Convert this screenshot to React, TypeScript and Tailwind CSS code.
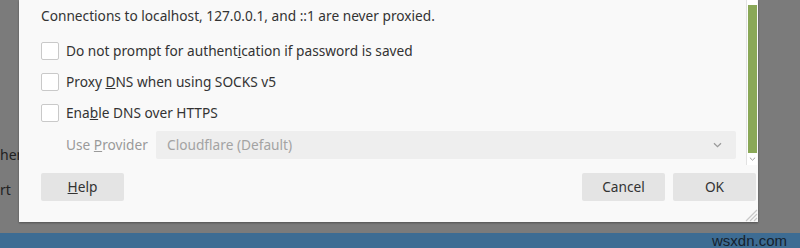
import React from 'react'

const Box = () => (
  <span className="w-[18px] h-[18px] shrink-0 rounded-[2px] border border-[#c9c9c9] bg-white" />
)

const Check = ({ children, className }: { children: React.ReactNode; className?: string }) => (
  <label className={`flex items-center gap-[7px] h-[18px] ${className ?? ''}`}>
    <Box />
    <span>{children}</span>
  </label>
)

const Chevron = ({ className }: { className?: string }) => (
  <svg className={className} width="9" height="6" viewBox="0 0 9 6" fill="none">
    <path d="M1 1.2 L4.5 4.6 L8 1.2" stroke="#9a9a9a" strokeWidth="1.3" />
  </svg>
)

const App = () => {
  return (
    <div className="w-[800px] h-[248px] bg-[#7b7b7b] flex flex-col overflow-hidden font-['Noto_Sans',sans-serif] text-[13.7px] text-[#333]">
      <div className="flex h-[223px]">
        <div className="w-[19px] shrink-0 overflow-hidden flex flex-col items-start text-[#222] text-[14px]">
          <span className="mt-[144px] whitespace-nowrap">hen</span>
          <span className="mt-[14px] whitespace-nowrap">rt</span>
        </div>
        <section className="relative w-[739px] shrink-0 bg-[#f9f9f9] shadow-[0_1px_2px_rgba(0,0,0,0.35)] flex flex-col">
          <div className="flex">
            <div className="flex-1 pl-[22px] flex flex-col">
              <p className="mt-[7px] h-[18px] leading-[18px]">Connections to localhost, 127.0.0.1, and ::1 are never proxied.</p>
              <Check className="mt-[17px]">Do not prompt for authent<u>i</u>cation if password is saved</Check>
              <Check className="mt-[13px]">Proxy <u>D</u>NS when using SOCKS v5</Check>
              <Check className="mt-[13px]">Ena<u>b</u>le DNS over HTTPS</Check>
              <div className="mt-[9px] flex items-center h-[28px] pl-[25px]">
                <span className="w-[90px] text-[#9a9a9a]">Use <u>P</u>rovider</span>
                <div className="w-[580px] h-[28px] bg-[#eeeeee] rounded-[2px] flex items-center justify-between pl-[11px] pr-[14px] text-[#a3a3a3]">
                  <span>Cloudflare (Default)</span>
                  <Chevron />
                </div>
              </div>
            </div>
            <div className="w-[11px] h-[165px] mr-px border-l border-[#e2e2e2] bg-white flex flex-col items-center">
              <div className="mt-[5px] w-[9px] h-[148px] ml-px bg-[#8aa857]" />
              <Chevron className="mt-[3px] scale-75" />
            </div>
          </div>
          <div className="mt-[8px] flex items-center px-[22px]">
            <button className="w-[83px] h-[28px] rounded-[2px] bg-[#e4e4e4]"><u>H</u>elp</button>
            <div className="ml-auto flex gap-[8px] mr-[-20px]">
              <button className="w-[83px] h-[28px] rounded-[2px] bg-[#e4e4e4]">Cancel</button>
              <button className="w-[83px] h-[28px] rounded-[2px] bg-[#e4e4e4]">OK</button>
            </div>
          </div>
          <svg className="absolute right-0 bottom-0" width="14" height="14" viewBox="0 0 14 14">
            <path d="M13 2 L2 13 M13 6 L6 13 M13 10 L10 13" stroke="#c8c8c8" strokeWidth="1.2" />
          </svg>
        </section>
      </div>
      <div className="h-[11px] shrink-0" />
      <div className="flex-1 bg-[#3d6c93] flex justify-end items-center pr-[13px]">
        <span className="text-[#15222e] text-[15px] leading-none font-['Liberation_Sans',sans-serif]">wsxdn.com</span>
      </div>
    </div>
  )
}

export default App
